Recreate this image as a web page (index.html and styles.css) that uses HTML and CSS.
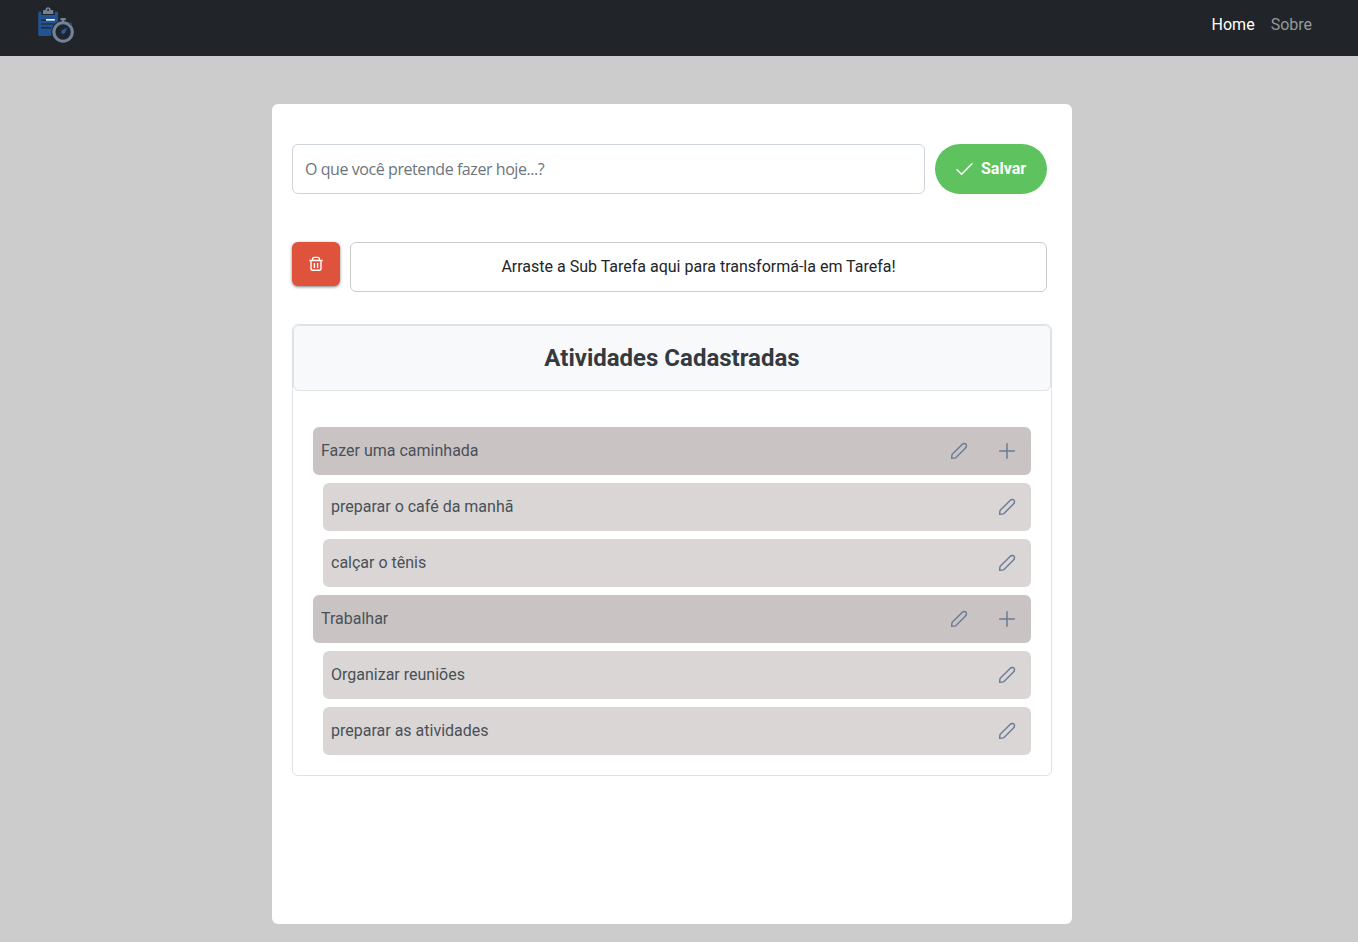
FILE: index.html
```html
<!DOCTYPE html>
<html lang="pt-BR">
<head>
<meta charset="utf-8">
<title>Lista de Atividades</title>
<link rel="stylesheet" href="styles.css">
</head>
<body>
<svg width="0" height="0" class="sprite">
  <symbol id="pencil" viewBox="0 0 18 18"><path d="M1.6 16.4 2 12.5 12.1 2.4Q13.8 1 15.4 1.7 16.6 2.5 16.5 4 16.3 5.1 15.5 5.9L5.5 15.9Z" fill="none" stroke="currentColor" stroke-width="1.4" stroke-linejoin="round"/></symbol>
  <symbol id="plus" viewBox="0 0 18 18"><path d="M9 1.7V16.3M1.7 9H16.3" fill="none" stroke="currentColor" stroke-width="1.5" stroke-linecap="round"/></symbol>
</svg>
<nav class="navbar">
  <svg class="logo" width="40" height="40" viewBox="0 0 40 40">
    <path d="M3.3 7.5H20.7Q22 7.5 22 9V19Q15 22 15.3 32H3.8Q2.2 32 2.2 30.4V9Q2.2 7.5 3.3 7.5Z" fill="#235390"/>
    <path d="M5.3 6.5H18.9V11H5.3Z" fill="#212529"/>
    <path d="M7 7Q7 6 8 6H9.4Q9.6 3.2 12 3.2 14.5 3.2 14.8 6H16.4Q17.3 6 17.3 7V10H7Z" fill="#71839b"/>
    <circle cx="12.1" cy="6" r="1" fill="#212529"/>
    <path d="M5 16.2H10" stroke="#212529" stroke-width="1.2"/>
    <path d="M10 15.8H18.8" stroke="#f2f5f8" stroke-width="1.6"/>
    <path d="M5 20H18M5 23.8H15" stroke="#212529" stroke-width="1.2"/>
    <circle cx="27.1" cy="27.8" r="11.6" fill="#212529"/>
    <path d="M24.5 15.2H29.8M27.1 15V19" stroke="#71839b" stroke-width="2.2"/>
    <circle cx="27.1" cy="28" r="9.2" fill="none" stroke="#71839b" stroke-width="3.1"/>
    <path d="m33.2 18.8 2.5 2" stroke="#235390" stroke-width="1.8"/>
    <path d="m31.2 23.4-2.1 5.1q-.8 1.9-2.9 1.3-1.9-1.5-.6-3.2Z" fill="#235fa8"/>
  </svg>
  <div class="links"><a class="active">Home</a><a>Sobre</a></div>
</nav>
<main class="panel">
  <form class="entry">
    <input class="field" type="text" placeholder="O que você pretende fazer hoje...?">
    <button class="save" type="button"><svg width="18" height="18" viewBox="0 0 18 18"><path d="M2 9.7 6.6 14.2 17 3.8" fill="none" stroke="currentColor" stroke-width="1.5" stroke-linecap="round" stroke-linejoin="round"/></svg><span>Salvar</span></button>
  </form>
  <section class="actions">
    <button class="remove" type="button" aria-label="Excluir"><svg width="16" height="16" viewBox="0 0 16 16" fill="none" stroke="currentColor" stroke-width="1.4"><path d="M1.3 4.5H14.7M3 4.5V12.7Q3 14.3 4.5 14.3H11.5Q13 14.3 13 12.7V4.5M4.6 4.3V3Q4.6 1.4 6.3 1.4H9.7Q11.4 1.4 11.4 3V4.3M6.4 7V12M9.6 7V12"/></svg></button>
    <div class="drop">Arraste a Sub Tarefa aqui para transformá-la em Tarefa!</div>
  </section>
  <section class="board">
    <h1 class="title">Atividades Cadastradas</h1>
    <div class="list">
      <div class="item"><span>Fazer uma caminhada</span><svg class="icon"><use href="#pencil"/></svg><svg class="icon"><use href="#plus"/></svg></div>
      <div class="item sub"><span>preparar o café da manhã</span><svg class="icon"><use href="#pencil"/></svg></div>
      <div class="item sub"><span>calçar o tênis</span><svg class="icon"><use href="#pencil"/></svg></div>
      <div class="item"><span>Trabalhar</span><svg class="icon"><use href="#pencil"/></svg><svg class="icon"><use href="#plus"/></svg></div>
      <div class="item sub"><span>Organizar reuniões</span><svg class="icon"><use href="#pencil"/></svg></div>
      <div class="item sub"><span>preparar as atividades</span><svg class="icon"><use href="#pencil"/></svg></div>
    </div>
  </section>
</main>
</body>
</html>
```
FILE: styles.css
```css
* { box-sizing: border-box; }
body { margin: 0; background: #ccc; color: #212529; font: 16px/24px Roboto, sans-serif; }
.sprite { display: block; }
.navbar { display: flex; justify-content: space-between; align-items: flex-start; height: 56px; padding: 4px 46px 0 36px; background: #212529; }
.logo { display: block; }
.links { display: flex; gap: 16px; padding-top: 9px; color: #97999b; }
.links .active { color: #fff; }
.panel { width: 800px; height: 820px; margin: 48px 0 0 272px; padding: 40px 20px; border-radius: 6px; background: #fff; }
.entry, .actions { display: flex; gap: 10px; padding-right: 5px; }
.field { flex: 1; min-width: 0; height: 50px; padding: 0 12px; border: 1px solid #ced4da; border-radius: 6px; font: 16px "Open Sans", sans-serif; letter-spacing: -0.43px; background: #fff; }
.field::placeholder { color: #6c757d; opacity: 1; }
.save { display: flex; align-items: center; gap: 8px; width: 112px; height: 50px; padding: 0 20px; border: 0; border-radius: 25px; background: #5ec35f; color: #fff; font: 700 16px/24px Roboto, sans-serif; }
.save svg { flex: none; }
.actions { margin-top: 48px; }
.remove { display: flex; align-items: center; justify-content: center; width: 48px; height: 44px; padding: 0; border: 0; border-radius: 6px; background: #df523c; color: #fff; box-shadow: 0 1px 3px rgba(0, 0, 0, .5); }
.drop { flex: 1; height: 50px; border: 1px solid #ccc; border-radius: 6px; line-height: 48px; text-align: center; }
.board { height: 452px; margin-top: 32px; border: 1px solid #dee2e6; border-radius: 6px; }
.title { height: 66px; margin: 0; border: 1px solid #dee2e6; border-radius: 6px; background: #f8f9fb; color: #343a40; font-size: 24px; font-weight: 700; line-height: 64px; text-align: center; }
.list { display: flex; flex-direction: column; gap: 8px; padding: 36px 20px 20px; }
.item { display: flex; align-items: center; gap: 30px; height: 48px; padding: 0 15px 0 8px; border-radius: 6px; background: #c9c4c3; color: #495057; }
.item span { flex: 1; }
.sub { margin-left: 10px; background: #dad6d5; }
.icon { width: 18px; height: 18px; color: #6b7b93; }
```
